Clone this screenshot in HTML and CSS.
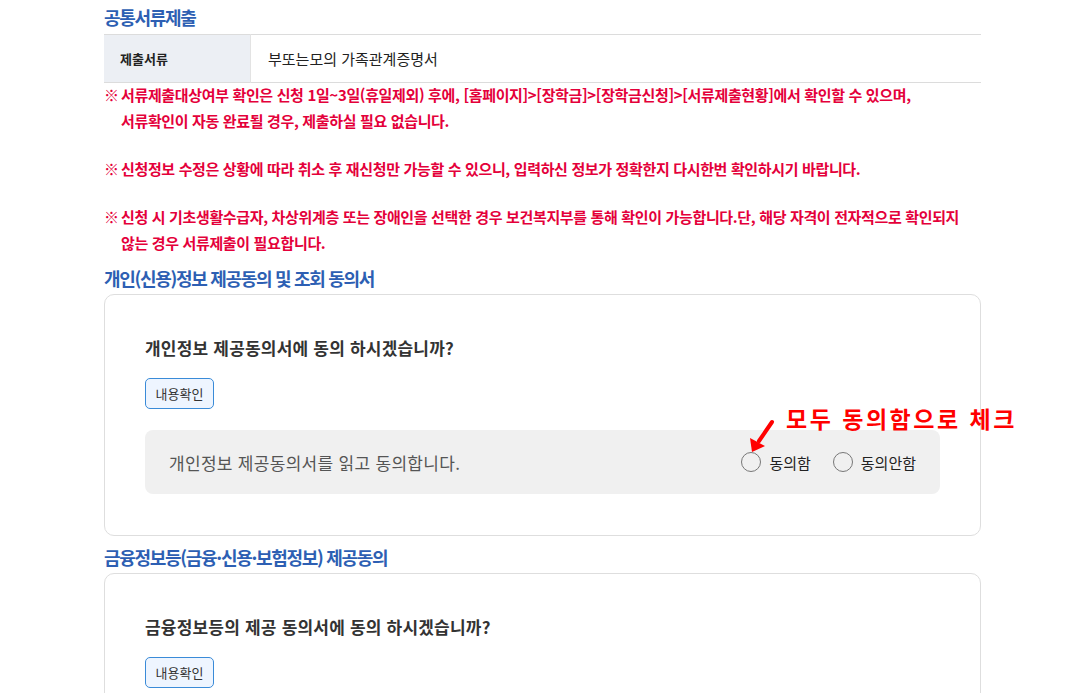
FILE: index.html
```html
<!DOCTYPE html>
<html lang="ko">
<head>
    <meta charset="UTF-8">
    <title>서류제출 및 동의</title>
    <link rel="stylesheet" href="styles.css">
</head>
<body>
    <div class="wrap">
        <h3 class="tit">공통서류제출</h3>
        <table class="doc-table">
            <tr>
                <th>제출서류</th>
                <td>부또는모의 가족관계증명서</td>
            </tr>
        </table>

        <div class="notes">
            <p class="note"><span class="mark">※</span><span>서류제출대상여부 확인은 신청 1일~3일(휴일제외) 후에, [홈페이지]&gt;[장학금]&gt;[장학금신청]&gt;[서류제출현황]에서 확인할 수 있으며,<br/>서류확인이 자동 완료될 경우, 제출하실 필요 없습니다.</span></p>
            <p class="note"><span class="mark">※</span><span>신청정보 수정은 상황에 따라 취소 후 재신청만 가능할 수 있으니, 입력하신 정보가 정확한지 다시한번 확인하시기 바랍니다.</span></p>
            <p class="note"><span class="mark">※</span><span>신청 시 기초생활수급자, 차상위계층 또는 장애인을 선택한 경우 보건복지부를 통해 확인이 가능합니다.단, 해당 자격이 전자적으로 확인되지<br/>않는 경우 서류제출이 필요합니다.</span></p>
        </div>

        <h3 class="tit">개인(신용)정보 제공동의 및 조회 동의서</h3>
        <div class="card">
            <p class="question">개인정보 제공동의서에 동의 하시겠습니까?</p>
            <button class="btn-check" type="button">내용확인</button>
            <div class="agree-box">
                <span class="agree-text">개인정보 제공동의서를 읽고 동의합니다.</span>
                <div class="radios">
                    <label class="radio"><span class="circle"></span>동의함</label>
                    <label class="radio"><span class="circle"></span>동의안함</label>
                </div>
            </div>
            <span class="memo">모두 동의함으로 체크</span>
            <svg class="arrow" width="30" height="36" viewBox="0 0 30 36">
                <line x1="26" y1="3" x2="13" y2="22" stroke="#ff0000" stroke-width="4" stroke-linecap="round"/>
                <polygon points="6,33 4,19 19,27" fill="#ff0000"/>
            </svg>
        </div>

        <h3 class="tit">금융정보등(금융·신용·보험정보) 제공동의</h3>
        <div class="card">
            <p class="question">금융정보등의 제공 동의서에 동의 하시겠습니까?</p>
            <button class="btn-check" type="button">내용확인</button>
            <div class="agree-box">
                <span class="agree-text">금융정보등의 제공 동의서를 읽고 동의합니다.</span>
                <div class="radios">
                    <label class="radio"><span class="circle"></span>동의함</label>
                    <label class="radio"><span class="circle"></span>동의안함</label>
                </div>
            </div>
        </div>
    </div>
</body>
</html>
```

FILE: styles.css
```css
body{
    margin: 0;
    background-color: #fff;
    font-family: "Noto Sans CJK KR", "Noto Sans", sans-serif;
    color: #333;
}
.wrap{
    width: 877px;
    margin-left: 104px;
    padding-top: 5px;
}
.tit{
    margin: 0;
    font-size: 18px;
    line-height: 24px;
    font-weight: bold;
    color: #2d5fb3;
    letter-spacing: -1.3px;
}
.doc-table{
    width: 100%;
    border-collapse: collapse;
    margin-top: 5px;
    border-top: 1px solid #dcdcdc;
    border-bottom: 1px solid #dcdcdc;
}
.doc-table th{
    width: 130px;
    height: 47px;
    padding: 0 0 0 16px;
    background-color: #eceff4;
    border-right: 1px solid #e3e3e3;
    text-align: left;
    font-size: 13px;
    color: #222;
}
.doc-table td{
    padding: 0 0 0 17px;
    font-size: 15px;
    color: #222;
}
.notes{
    margin-top: -1px;
}
.note{
    display: flex;
    margin: 0 0 22px 0;
    font-size: 15px;
    line-height: 26px;
    font-weight: bold;
    color: #e4003a;
    letter-spacing: -0.35px;
}
.note:last-child{
    margin-bottom: 10px;
}
.mark{
    flex: 0 0 17px;
    letter-spacing: 0;
}
.card{
    position: relative;
    margin-top: 4px;
    margin-bottom: 9px;
    padding: 39px 40px 41px 40px;
    border: 1px solid #dedede;
    border-radius: 10px;
}
.question{
    margin: 0;
    font-size: 17px;
    line-height: 28px;
    font-weight: bold;
    color: #333;
    letter-spacing: 0.2px;
}
.btn-check{
    display: block;
    margin-top: 16px;
    width: 69px;
    height: 31px;
    padding: 0;
    border: 1px solid #3a8bd8;
    border-radius: 5px;
    background-color: #eef5ff;
    font-family: inherit;
    font-size: 13px;
    color: #333;
}
.agree-box{
    display: flex;
    align-items: center;
    justify-content: space-between;
    height: 64px;
    margin-top: 21px;
    padding: 0 24px;
    background-color: #f0f0f0;
    border-radius: 8px;
}
.agree-text{
    font-size: 17px;
    color: #555;
    letter-spacing: 0.3px;
}
.radios{
    display: flex;
    gap: 22px;
}
.radio{
    display: flex;
    align-items: center;
    gap: 8px;
    font-size: 15px;
    color: #222;
}
.circle{
    width: 18px;
    height: 18px;
    border: 1.5px solid #777;
    border-radius: 50%;
}
.memo{
    position: absolute;
    left: 681px;
    top: 106px;
    font-size: 23px;
    font-weight: bold;
    letter-spacing: 2.5px;
    color: #ff0000;
    white-space: nowrap;
}
.arrow{
    position: absolute;
    left: 641px;
    top: 124px;
}
```
